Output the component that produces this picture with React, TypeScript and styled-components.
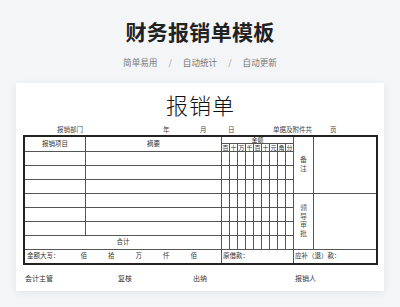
import React from "react";
import styled, { createGlobalStyle } from "styled-components";

const GlobalStyle = createGlobalStyle`
  html, body {
    margin: 0;
    padding: 0;
    background: #f4f5f7;
    overflow: hidden;
  }
  body {
    font-family: "Noto Sans CJK SC", "Noto Sans", sans-serif;
  }
`;

const digitLabels = ["百", "十", "万", "千", "百", "十", "元", "角", "分"];
const dataRows = [3, 4, 5, 6, 7, 8];
const bigUnits = ["佰", "拾", "万", "仟", "佰"];

const App: React.FC = () => {
  return (
    <Page>
      <GlobalStyle />
      <Heading>财务报销单模板</Heading>
      <Tags>
        <span>简单易用</span>
        <Slash>/</Slash>
        <span>自动统计</span>
        <Slash>/</Slash>
        <span>自动更新</span>
      </Tags>
      <Card>
        <FormTitle>报销单</FormTitle>
        <MetaRow>
          <span>报销部门</span>
          <span>年</span>
          <span>月</span>
          <span>日</span>
          <span>单据及附件共</span>
          <span>页</span>
        </MetaRow>
        <Sheet>
          <Cell $c="1" $r="1 / 3">报销项目</Cell>
          <Cell $c="2" $r="1 / 3">摘要</Cell>
          <Cell $c="3 / 12" $r="1" $small>
            金额
          </Cell>
          {digitLabels.map((d, i) => (
            <Cell key={"d" + i} $c={String(3 + i)} $r="2" $small>
              {d}
            </Cell>
          ))}
          <Cell $c="12" $r="1 / 6">
            <Vertical>
              <span>备</span>
              <span>注</span>
            </Vertical>
          </Cell>
          <Cell $c="13" $r="1 / 6" />
          <Cell $c="12" $r="6 / 10">
            <Vertical>
              <span>领</span>
              <span>导</span>
              <span>审</span>
              <span>批</span>
            </Vertical>
          </Cell>
          <Cell $c="13" $r="6 / 10" />
          {dataRows.map((r) => (
            <React.Fragment key={"r" + r}>
              <Cell $c="1" $r={String(r)} />
              <Cell $c="2" $r={String(r)} />
              {digitLabels.map((_, i) => (
                <Cell key={i} $c={String(3 + i)} $r={String(r)} />
              ))}
            </React.Fragment>
          ))}
          <Cell $c="1 / 3" $r="9">合计</Cell>
          {digitLabels.map((_, i) => (
            <Cell key={"t" + i} $c={String(3 + i)} $r="9" />
          ))}
          <Cell $c="1 / 3" $r="10" $left>
            <BigAmount>
              <span>金额大写：</span>
              {bigUnits.map((u, i) => (
                <span key={i}>{u}</span>
              ))}
            </BigAmount>
          </Cell>
          <Cell $c="3 / 12" $r="10" $left>
            原借款：
          </Cell>
          <Cell $c="12 / 14" $r="10" $left>
            应补（退）款：
          </Cell>
        </Sheet>
        <Signatures>
          <span>会计主管</span>
          <span>复核</span>
          <span>出纳</span>
          <span>报销人</span>
        </Signatures>
      </Card>
    </Page>
  );
};

export default App;

const Page = styled.div`
  width: 400px;
  height: 307px;
  display: flex;
  flex-direction: column;
  align-items: center;
`;

const Heading = styled.h1`
  margin: 17px 0 0;
  font-size: 21px;
  line-height: 28px;
  font-weight: 700;
  color: #222;
  letter-spacing: 0.3px;
`;

const Tags = styled.div`
  margin-top: 9px;
  display: flex;
  align-items: center;
  gap: 10px;
  font-size: 8.6px;
  line-height: 16px;
  color: #777;
`;

const Slash = styled.span`
  color: #999;
  padding: 0 1px;
`;

const Card = styled.div`
  margin-top: 13px;
  width: 368px;
  height: 208px;
  box-sizing: border-box;
  background: #fff;
  box-shadow: 0 2px 8px rgba(0, 0, 0, 0.07);
  padding: 8px 6px 0 7px;
  display: flex;
  flex-direction: column;
  font-family: "Liberation Serif", "Noto Sans CJK SC", serif;
  color: #333;
`;

const FormTitle = styled.div`
  text-align: center;
  font-family: "Noto Sans CJK SC", serif;
  font-size: 22px;
  line-height: 26px;
  font-weight: 300;
  color: #111;
  letter-spacing: 1px;
`;

const MetaRow = styled.div`
  margin-top: 6px;
  height: 12px;
  display: grid;
  grid-template-columns: 106px 37px 28px 45px 57px auto;
  padding-left: 34px;
  align-items: center;
  font-size: 6.5px;
  color: #444;
  white-space: nowrap;
`;

const Sheet = styled.div`
  width: 355px;
  box-sizing: border-box;
  display: grid;
  grid-template-columns: 60px 135px repeat(9, 7px) 19px 62px;
  grid-template-rows: 6px 7px repeat(6, 13px) 13px 13px;
  gap: 1px;
  background: #555;
  border: 2px solid #222;
  font-size: 6.5px;
  color: #333;
`;

const Cell = styled.div<{ $c: string; $r: string; $small?: boolean; $left?: boolean }>`
  grid-column: ${(p) => p.$c};
  grid-row: ${(p) => p.$r};
  background: #fff;
  display: flex;
  align-items: center;
  justify-content: ${(p) => (p.$left ? "flex-start" : "center")};
  padding-left: ${(p) => (p.$left ? "1px" : "0")};
  font-size: ${(p) => (p.$small ? "6px" : "6.5px")};
  line-height: 1;
  white-space: nowrap;
  overflow: visible;
`;

const Vertical = styled.div`
  display: flex;
  flex-direction: column;
  align-items: center;
  gap: 1.5px;
  font-size: 7px;
  line-height: 7px;
  color: #555;
`;

const BigAmount = styled.div`
  display: flex;
  gap: 21px;
  padding-left: 1px;
`;

const Signatures = styled.div`
  height: 26px;
  display: grid;
  grid-template-columns: 93px 75px 102px auto;
  padding-left: 2px;
  align-items: center;
  font-size: 7px;
  color: #333;
`;
